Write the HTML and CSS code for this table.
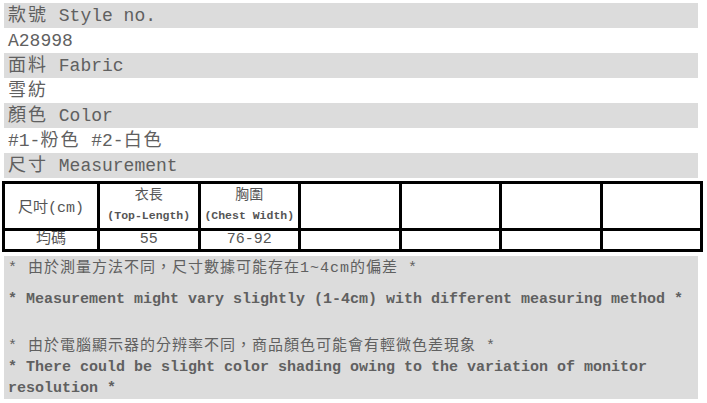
FILE: index.html
```html
<!DOCTYPE html>
<html lang="zh-Hant">
<head>
    <meta charset="UTF-8">
    <title>商品規格</title>
    <link rel="stylesheet" href="styles.css">
</head>
<body>
    <div class="spec">
        <div class="row label"><span class="cn">款號</span> Style no.</div>
        <div class="row">A28998</div>
        <div class="row label"><span class="cn">面料</span> Fabric</div>
        <div class="row"><span class="cn">雪紡</span></div>
        <div class="row label"><span class="cn">顏色</span> Color</div>
        <div class="row">#1-<span class="cn">粉色</span> #2-<span class="cn">白色</span></div>
        <div class="row label"><span class="cn">尺寸</span> Measurement</div>
    </div>

    <table class="size-table">
        <colgroup>
            <col class="col-first">
            <col><col><col><col><col><col>
        </colgroup>
        <tr class="head">
            <td class="first">尺吋(cm)</td>
            <td><div class="zh">衣長</div><div class="en">(Top-Length)</div></td>
            <td><div class="zh">胸圍</div><div class="en">(Chest Width)</div></td>
            <td></td>
            <td></td>
            <td></td>
            <td></td>
        </tr>
        <tr class="values">
            <td>均碼</td>
            <td>55</td>
            <td>76-92</td>
            <td></td>
            <td></td>
            <td></td>
            <td></td>
        </tr>
    </table>

    <div class="notes">
        <p class="zh-note">* 由於測量方法不同，尺寸數據可能存在1~4cm的偏差 *</p>
        <p class="en-note">* Measurement might vary slightly (1-4cm) with different measuring method *</p>
        <p class="gap"><span class="zh-note">* 由於電腦顯示器的分辨率不同，商品顏色可能會有輕微色差現象 *</span><br>* There could be slight color shading owing to the variation of monitor resolution *</p>
    </div>
</body>
</html>
```

FILE: styles.css
```css
body {
    margin: 3px 2px;
    font-family: "Liberation Mono", "Noto Sans CJK TC", monospace;
    color: #606060;
    background-color: white;
}
.spec {
    margin: 0 7px 0 2px;
}
.row {
    height: 23px;
    padding-top: 2px;
    line-height: 23px;
    font-size: 18px;
    padding-left: 4px;
    white-space: nowrap;
}
.row.label {
    background-color: #dcdcdc;
}
.cn {
    letter-spacing: 2px;
}
.size-table {
    width: 701px;
    margin-top: 3px;
    border-collapse: collapse;
    table-layout: fixed;
    border: 3px solid #000;
}
.size-table col.col-first {
    width: 95px;
}
.size-table td {
    border: 3px solid #000;
    text-align: center;
    padding: 0;
    color: #555;
}
.head td {
    height: 44px;
    vertical-align: middle;
}
.head .first {
    font-size: 15px;
}
.zh {
    font-size: 14px;
    line-height: 20px;
}
.en {
    font-size: 11.5px;
    line-height: 22px;
    font-weight: bold;
    white-space: nowrap;
}
.values td {
    height: 18px;
    font-size: 15px;
    line-height: 18px;
}
.notes {
    margin: 4px 7px 0 2px;
    padding: 2px 4px 0 4px;
    height: 141px;
    background-color: #dcdcdc;
    font-size: 15px;
    line-height: 21px;
    font-weight: bold;
}
.notes p {
    margin: 0;
}
.zh-note {
    font-weight: normal;
    letter-spacing: 1px;
}
.en-note {
    margin-top: 10px !important;
}
.gap {
    margin-top: 26px !important;
}
```
